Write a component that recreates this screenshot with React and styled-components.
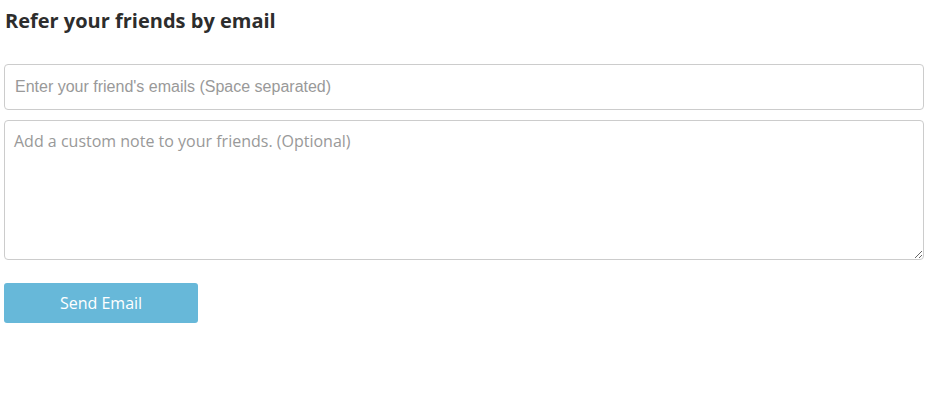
import React from 'react'
import styled, { createGlobalStyle } from 'styled-components'

const GlobalStyle = createGlobalStyle`
  body {
    margin: 0;
    background: #fff;
    font-family: 'Open Sans', sans-serif;
  }
`

const Wrapper = styled.div`
  width: 920px;
  padding: 0 0 0 4px;
  display: flex;
  flex-direction: column;
`

const Title = styled.h3`
  margin: 7px 0 0 1px;
  font-size: 20px;
  line-height: 28px;
  font-weight: 700;
  color: #2d2d2d;
`

const EmailInput = styled.input`
  box-sizing: border-box;
  margin-top: 29px;
  height: 46px;
  width: 100%;
  padding: 0 10px;
  border: 1px solid #cccccc;
  border-radius: 4px;
  font-family: 'Liberation Sans', Arial, sans-serif;
  font-size: 16px;
  color: #333;
  outline: none;
  &::placeholder {
    color: #999;
  }
`

const NoteArea = styled.textarea`
  box-sizing: border-box;
  margin-top: 10px;
  height: 140px;
  width: 100%;
  padding: 9px 9px;
  border: 1px solid #cccccc;
  border-radius: 4px;
  font-family: 'Open Sans', sans-serif;
  font-size: 16px;
  line-height: 22px;
  color: #333;
  outline: none;
  resize: vertical;
  &::placeholder {
    color: #999;
  }
`

const SendButton = styled.button`
  margin-top: 23px;
  width: 194px;
  height: 40px;
  border: none;
  border-radius: 3px;
  background: #67b8d9;
  color: #fff;
  font-family: 'Open Sans', sans-serif;
  font-size: 16px;
  cursor: pointer;
`

export default function App() {
  return (
    <>
      <GlobalStyle />
      <Wrapper>
        <Title>Refer your friends by email</Title>
        <EmailInput placeholder="Enter your friend's emails (Space separated)" />
        <NoteArea placeholder="Add a custom note to your friends. (Optional)" />
        <SendButton>Send Email</SendButton>
      </Wrapper>
    </>
  )
}
